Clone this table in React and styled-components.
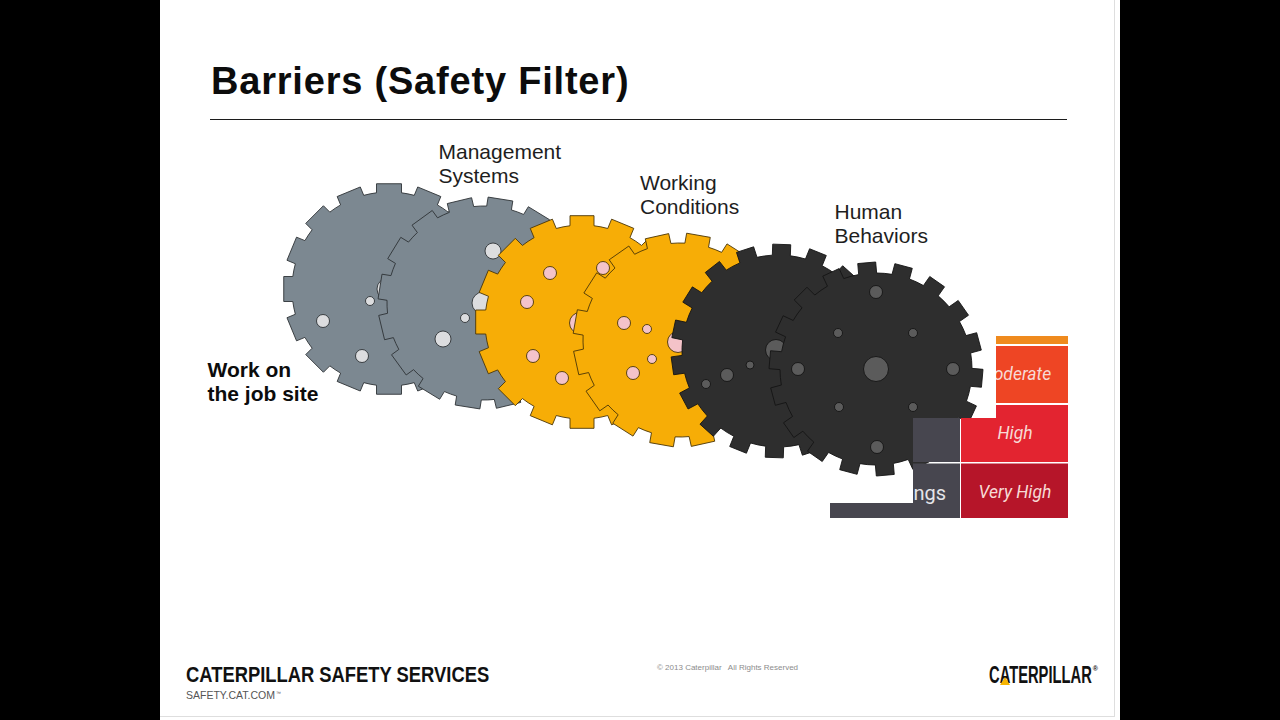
import React from 'react';
import styled, { createGlobalStyle } from 'styled-components';

const GlobalStyle = createGlobalStyle`
  html, body {
    margin: 0;
    padding: 0;
    background: #000;
  }
  body {
    font-family: "Liberation Sans", Arial, sans-serif;
  }
`;

const Stage = styled.div`
  width: 1280px;
  height: 720px;
  display: flex;
  justify-content: center;
  background: #000;
  overflow: hidden;
`;

const Slide = styled.div`
  width: 960px;
  height: 720px;
  background: #fff;
`;

const Frame = styled.div`
  width: 955px;
  height: 717px;
  box-sizing: border-box;
  border-right: 1px solid #dedede;
  border-bottom: 1px solid #dedede;
  display: flex;
  flex-direction: column;
`;

const Header = styled.header`
  padding: 62px 0 0 50px;
`;

const Title = styled.h1`
  margin: 0 0 0 1px;
  font: bold 38px/38px "Liberation Sans", Arial, sans-serif;
  letter-spacing: 0.8px;
  color: #0c0c0c;
`;

const Rule = styled.hr`
  margin: 19px 0 0;
  width: 857px;
  height: 0;
  border: 0;
  border-top: 1px solid #1c1c1c;
`;

const Diagram = styled.div`
  position: relative;
  height: 535px;
`;

const Canvas = styled.svg`
  display: block;
`;

const Label = styled.div`
  position: absolute;
  left: ${p => p.$x}px;
  top: ${p => p.$y}px;
  font-family: "Liberation Sans", Arial, sans-serif;
  font-size: 21px;
  font-weight: ${p => (p.$bold ? 'bold' : 'normal')};
  line-height: ${p => (p.$bold ? 24 : 24)}px;
  color: ${p => (p.$bold ? '#0c0c0c' : '#1e1e1e')};
  white-space: nowrap;
`;

const CellText = styled.text`
  font-family: Roboto, "Liberation Sans", sans-serif;
  font-style: italic;
  font-size: 17.5px;
  fill: #f7dad5;
`;

const RowLabel = styled.text`
  font-family: Roboto, "Liberation Sans", sans-serif;
  font-size: 20px;
  fill: #e4e4e8;
`;

const Footer = styled.footer`
  flex: 1;
  display: flex;
  align-items: flex-start;
  padding: 9px 16px 0 26px;
`;

const Brand = styled.div`
  width: 471px;
`;

const BrandName = styled.div`
  font: bold 22px/22px "Liberation Sans", Arial, sans-serif;
  color: #111;
  white-space: nowrap;
  transform: scaleX(0.835);
  transform-origin: left center;
`;

const BrandUrl = styled.div`
  margin-top: 1px;
  font: 10.5px/12px "Liberation Sans", Arial, sans-serif;
  color: #555;
  sup {
    font-size: 5px;
    vertical-align: 4px;
    margin-left: 1px;
  }
`;

const Copyright = styled.div`
  margin-top: -1px;
  font: 8px/10px "Liberation Sans", Arial, sans-serif;
  color: #8c8c8c;
  white-space: nowrap;
`;

const Logo = styled.div`
  margin-left: auto;
  position: relative;
  width: 109px;
  height: 23px;
`;

const LogoWord = styled.span`
  display: inline-block;
  font: bold 23px/23px "Liberation Sans", Arial, sans-serif;
  color: #111;
  transform: scaleX(0.64);
  transform-origin: left center;
  white-space: nowrap;
`;

const LogoMark = styled.svg`
  position: absolute;
  left: 11px;
  top: 12.5px;
`;

const Registered = styled.span`
  position: absolute;
  right: 0;
  top: 1px;
  font: bold 7px/7px "Liberation Sans", Arial, sans-serif;
  color: #111;
`;

const palette = {
  grey: { body: '#7c8891', line: '#2e3236', hole: '#dcdddf' },
  orange: { body: '#f7ad06', line: '#4a3508', hole: '#f4c3c9' },
  dark: { body: '#2e2e2e', line: '#141414', hole: '#5b5b5b' },
};

const shapes = {
  grey: { ro: 106, rr: 97, w: 12.5, n: 16 },
  orange: { ro: 107, rr: 97, w: 12, n: 16 },
  dark: { ro: 107, rr: 96, w: 9, n: 18 },
};

function gearPath(cx, cy, { ro, rr, w, n }, rotDeg) {
  const rot = (rotDeg * Math.PI) / 180;
  const step = (Math.PI * 2) / n;
  const a = Math.asin(w / rr);
  const f = v => v.toFixed(2);
  let d = '';
  for (let i = 0; i < n; i++) {
    const th = rot + i * step;
    const ux = Math.cos(th);
    const uy = Math.sin(th);
    const vx = -uy;
    const vy = ux;
    const top = Math.sqrt(ro * ro - w * w);
    const p1 = [cx + rr * Math.cos(th - a), cy + rr * Math.sin(th - a)];
    const p2 = [cx + top * ux - w * vx, cy + top * uy - w * vy];
    const p3 = [cx + top * ux + w * vx, cy + top * uy + w * vy];
    const p4 = [cx + rr * Math.cos(th + a), cy + rr * Math.sin(th + a)];
    const next = th + step - a;
    const p5 = [cx + rr * Math.cos(next), cy + rr * Math.sin(next)];
    d += `${i === 0 ? 'M' : 'L'}${f(p1[0])} ${f(p1[1])}`;
    d += `L${f(p2[0])} ${f(p2[1])}L${f(p3[0])} ${f(p3[1])}L${f(p4[0])} ${f(p4[1])}`;
    d += `A${rr} ${rr} 0 0 1 ${f(p5[0])} ${f(p5[1])}`;
  }
  return d + 'Z';
}

const gears = [
  { cx: 389, cy: 289, kind: 'grey', rot: 0,
    holes: [[388, 289, 11], [323, 321, 6.5], [362, 356, 6.5], [370, 301, 4.5], [426, 224, 6.5]] },
  { cx: 484, cy: 303, kind: 'grey', rot: 9,
    holes: [[483, 303, 11], [493, 251, 8], [465, 318, 4.5], [443, 339, 8]] },
  { cx: 582, cy: 322, kind: 'orange', rot: 0,
    holes: [[580, 323, 10.5], [550, 273, 6.5], [527, 302, 6.5], [533, 356, 6.5], [562, 378, 6.5], [603, 268, 6.5]] },
  { cx: 680, cy: 340, kind: 'orange', rot: 10,
    holes: [[678, 342, 10.5], [624, 323, 6.5], [647, 329, 4.5], [652, 359, 4.5], [633, 373, 6.5]] },
  { cx: 778, cy: 351, kind: 'dark', rot: 12,
    holes: [[776, 350, 10.5], [750, 365, 4], [727, 375, 6.5], [706, 384, 4.5]] },
  { cx: 876, cy: 369, kind: 'dark', rot: 5,
    holes: [[876, 369, 12.5], [876, 292, 6.5], [877, 447, 6.5], [798, 369, 6.5], [953, 369, 6.5],
      [838, 333, 4.5], [913, 333, 4.5], [839, 407, 4.5], [913, 407, 4.5]] },
];

function Gear({ gear }) {
  const c = palette[gear.kind];
  return (
    <g>
      <path d={gearPath(gear.cx, gear.cy, shapes[gear.kind], gear.rot)} fill={c.body} stroke={c.line} strokeWidth="0.9" />
      {gear.holes.map(([x, y, r], i) => (
        <circle key={i} cx={x} cy={y} r={r} fill={c.hole} stroke={c.line} strokeWidth="0.9" />
      ))}
    </g>
  );
}

// risk table sits on top of the last gear, only partly shown
function RiskTable() {
  return (
    <g clipPath="url(#tableClip)">
      <rect x="961" y="336" width="107" height="8" fill="#ef8a1e" />
      <rect x="830" y="346" width="130" height="57" fill="#47464f" />
      <rect x="830" y="405" width="130" height="57" fill="#47464f" />
      <rect x="830" y="463.5" width="130" height="54.5" fill="#47464f" />
      <rect x="961" y="346" width="107" height="57" fill="#ee4524" />
      <rect x="961" y="405" width="107" height="57" fill="#e32430" />
      <rect x="961" y="463.5" width="107" height="54.5" fill="#b61529" />
      <CellText x="1015" y="380" textAnchor="middle">Moderate</CellText>
      <CellText x="1015" y="439" textAnchor="middle">High</CellText>
      <CellText x="1015" y="498" textAnchor="middle">Very High</CellText>
      <RowLabel x="946" y="500" textAnchor="end">Ratings</RowLabel>
    </g>
  );
}

export default function App() {
  return (
    <>
      <GlobalStyle />
      <Stage>
        <Slide>
          <Frame>
            <Header>
              <Title>Barriers (Safety Filter)</Title>
              <Rule />
            </Header>
            <Diagram>
              <Canvas width="955" height="535" viewBox="160 120 955 535">
                <defs>
                  <clipPath id="tableClip">
                    <polygon points="996,330 1075,330 1075,525 825,525 825,503 913,503 913,418 996,418" />
                  </clipPath>
                </defs>
                {gears.map((g, i) => (
                  <Gear key={i} gear={g} />
                ))}
                <RiskTable />
              </Canvas>
              <Label $x={278.5} $y={20}>Management<br />Systems</Label>
              <Label $x={480} $y={51}>Working<br />Conditions</Label>
              <Label $x={674.5} $y={80}>Human<br />Behaviors</Label>
              <Label $x={47.5} $y={237.5} $bold>Work on<br />the job site</Label>
            </Diagram>
            <Footer>
              <Brand>
                <BrandName>CATERPILLAR SAFETY SERVICES</BrandName>
                <BrandUrl>SAFETY.CAT.COM<sup>™</sup></BrandUrl>
              </Brand>
              <Copyright>© 2013 Caterpillar &nbsp; All Rights Reserved</Copyright>
              <Logo>
                <LogoWord>CATERPILLAR</LogoWord>
                <LogoMark width="10" height="8" viewBox="0 0 10 8">
                  <polygon points="5,0 10,8 0,8" fill="#f6b400" />
                </LogoMark>
                <Registered>®</Registered>
              </Logo>
            </Footer>
          </Frame>
        </Slide>
      </Stage>
    </>
  );
}
